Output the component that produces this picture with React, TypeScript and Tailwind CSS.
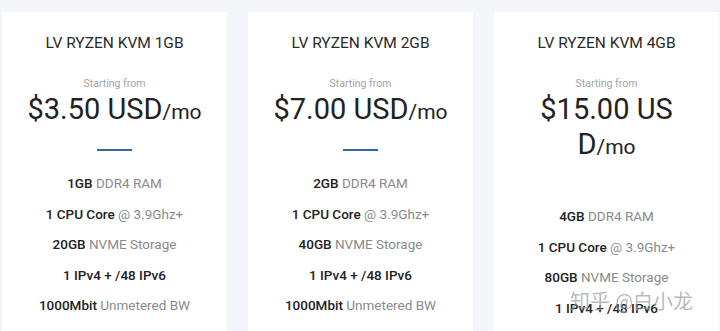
import React from "react";

type Feature = { b: string; g: string };
type Plan = { title: string; price: React.ReactNode; features: Feature[] };

const plans: Plan[] = [
  {
    title: "LV RYZEN KVM 1GB",
    price: (
      <>
        $3.50 USD<span className="text-[21px]">/mo</span>
      </>
    ),
    features: [
      { b: "1GB", g: "DDR4 RAM" },
      { b: "1 CPU Core", g: "@ 3.9Ghz+" },
      { b: "20GB", g: "NVME Storage" },
      { b: "1 IPv4 + /48 IPv6", g: "" },
      { b: "1000Mbit", g: "Unmetered BW" },
    ],
  },
  {
    title: "LV RYZEN KVM 2GB",
    price: (
      <>
        $7.00 USD<span className="text-[21px]">/mo</span>
      </>
    ),
    features: [
      { b: "2GB", g: "DDR4 RAM" },
      { b: "1 CPU Core", g: "@ 3.9Ghz+" },
      { b: "40GB", g: "NVME Storage" },
      { b: "1 IPv4 + /48 IPv6", g: "" },
      { b: "1000Mbit", g: "Unmetered BW" },
    ],
  },
  {
    title: "LV RYZEN KVM 4GB",
    price: (
      <>
        $15.00 US
        <br />
        D<span className="text-[21px]">/mo</span>
      </>
    ),
    features: [
      { b: "4GB", g: "DDR4 RAM" },
      { b: "1 CPU Core", g: "@ 3.9Ghz+" },
      { b: "80GB", g: "NVME Storage" },
      { b: "1 IPv4 + /48 IPv6", g: "" },
      { b: "1000Mbit", g: "Unmetered BW" },
    ],
  },
];

function Card({ plan }: { plan: Plan }) {
  return (
    <div className="w-[225px] shrink-0 bg-white flex flex-col items-center pt-[20px] text-center">
      <div className="text-[15.5px] leading-[22px] text-[#2b2b2b]">{plan.title}</div>
      <div className="mt-[23px] text-[10.5px] leading-[14px] text-[#a3a3a3]">Starting from</div>
      <div className="mt-[1px] text-[29px] leading-[35px] text-[#222]">{plan.price}</div>
      <div className="mt-[19px] w-[35px] h-[2px] bg-[#2f6aa6]" />
      <div className="mt-[17px] flex flex-col items-center">
        {plan.features.map((f, i) => (
          <div key={i} className="text-[13.5px] leading-[30.5px] whitespace-nowrap">
            <span className="font-medium text-[#222]">{f.b}</span>
            {f.g && <span className="text-[#8a8a8a]"> {f.g}</span>}
          </div>
        ))}
      </div>
    </div>
  );
}

export default function App() {
  return (
    <div
      className="relative w-[720px] h-[331px] overflow-hidden bg-[#f3f5f8]"
      style={{ fontFamily: "Roboto, 'Noto Sans CJK SC', sans-serif" }}
    >
      <div className="flex gap-[21px] pl-[2px] pt-[12px] h-full">
        {plans.map((p, i) => (
          <Card key={i} plan={p} />
        ))}
      </div>
      <div className="absolute left-[570px] top-[289px] text-[20px] leading-[26px] text-[#9a9a9a]/70 whitespace-nowrap">
        知乎 @白小龙
      </div>
    </div>
  );
}
